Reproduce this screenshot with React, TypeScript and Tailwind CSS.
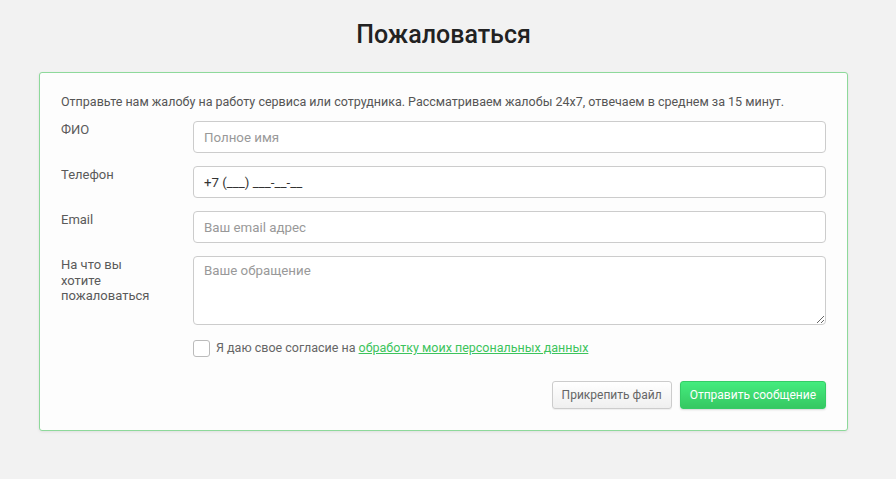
import React from "react";

export default function App() {
  const labelCls = "w-[100px] shrink-0 pt-[1px] text-[13px] leading-[15.5px] text-[#5a5a5a] mr-[32px]";
  const inputCls =
    "h-[32px] flex-1 rounded-[4px] border border-[#ccc] bg-white px-[10px] text-[13.3px] text-[#333] placeholder:text-[#999] outline-none";
  return (
    <div className="min-h-[479px] w-full bg-[#f2f2f2] pt-[18px]" style={{ fontFamily: "Roboto, 'Noto Sans', sans-serif" }}>
      <div className="w-[887px] px-[39px]">
        <h1 className="text-center text-[25px] font-medium leading-[34px] text-[#222]">Пожаловаться</h1>
        <div className="mt-[20px] rounded-[3px] border border-[#8ed99b] bg-[#fdfdfd] px-[21px] pb-[21px] pt-[21px] shadow-[0_1px_3px_rgba(0,0,0,0.08)]">
          <p className="text-[12.5px] leading-[16px] text-[#555]">
            Отправьте нам жалобу на работу сервиса или сотрудника. Рассматриваем жалобы 24x7, отвечаем в среднем за 15 минут.
          </p>
          <div className="mt-[11px] flex flex-col gap-[13px]">
            <div className="flex">
              <label className={labelCls}>ФИО</label>
              <input className={inputCls} placeholder="Полное имя" />
            </div>
            <div className="flex">
              <label className={labelCls}>Телефон</label>
              <input className={inputCls} defaultValue="+7 (___) ___-__-__" />
            </div>
            <div className="flex">
              <label className={labelCls}>Email</label>
              <input className={inputCls} placeholder="Ваш email адрес" />
            </div>
            <div className="flex">
              <label className={labelCls}>На что вы хотите пожаловаться</label>
              <textarea
                className="h-[69px] flex-1 rounded-[4px] border border-[#ccc] bg-white px-[10px] py-[5px] text-[13.3px] leading-[18px] text-[#333] placeholder:text-[#999] outline-none"
                placeholder="Ваше обращение"
              />
            </div>
          </div>
          <div className="mt-[14px] flex items-center pl-[132px]">
            <span className="h-[17px] w-[17px] rounded-[3px] border border-[#bbb] bg-white" />
            <span className="ml-[6px] text-[12.5px] text-[#666]">
              Я даю свое согласие на{" "}
              <a href="#" className="text-[#3cc45c] underline">обработку моих персональных данных</a>
            </span>
          </div>
          <div className="mt-[23px] flex justify-end gap-[8px]">
            <button className="h-[28px] rounded-[3px] border border-[#ccc] bg-gradient-to-b from-white to-[#efefef] px-[9px] text-[12px] text-[#666] shadow-[0_1px_1px_rgba(0,0,0,0.06)]">
              Прикрепить файл
            </button>
            <button className="h-[28px] rounded-[3px] border border-[#35cc66] bg-gradient-to-b from-[#44ec7e] to-[#36c862] px-[9px] text-[12px] text-white shadow-[0_1px_2px_rgba(0,0,0,0.15)]">
              Отправить сообщение
            </button>
          </div>
        </div>
      </div>
    </div>
  );
}
